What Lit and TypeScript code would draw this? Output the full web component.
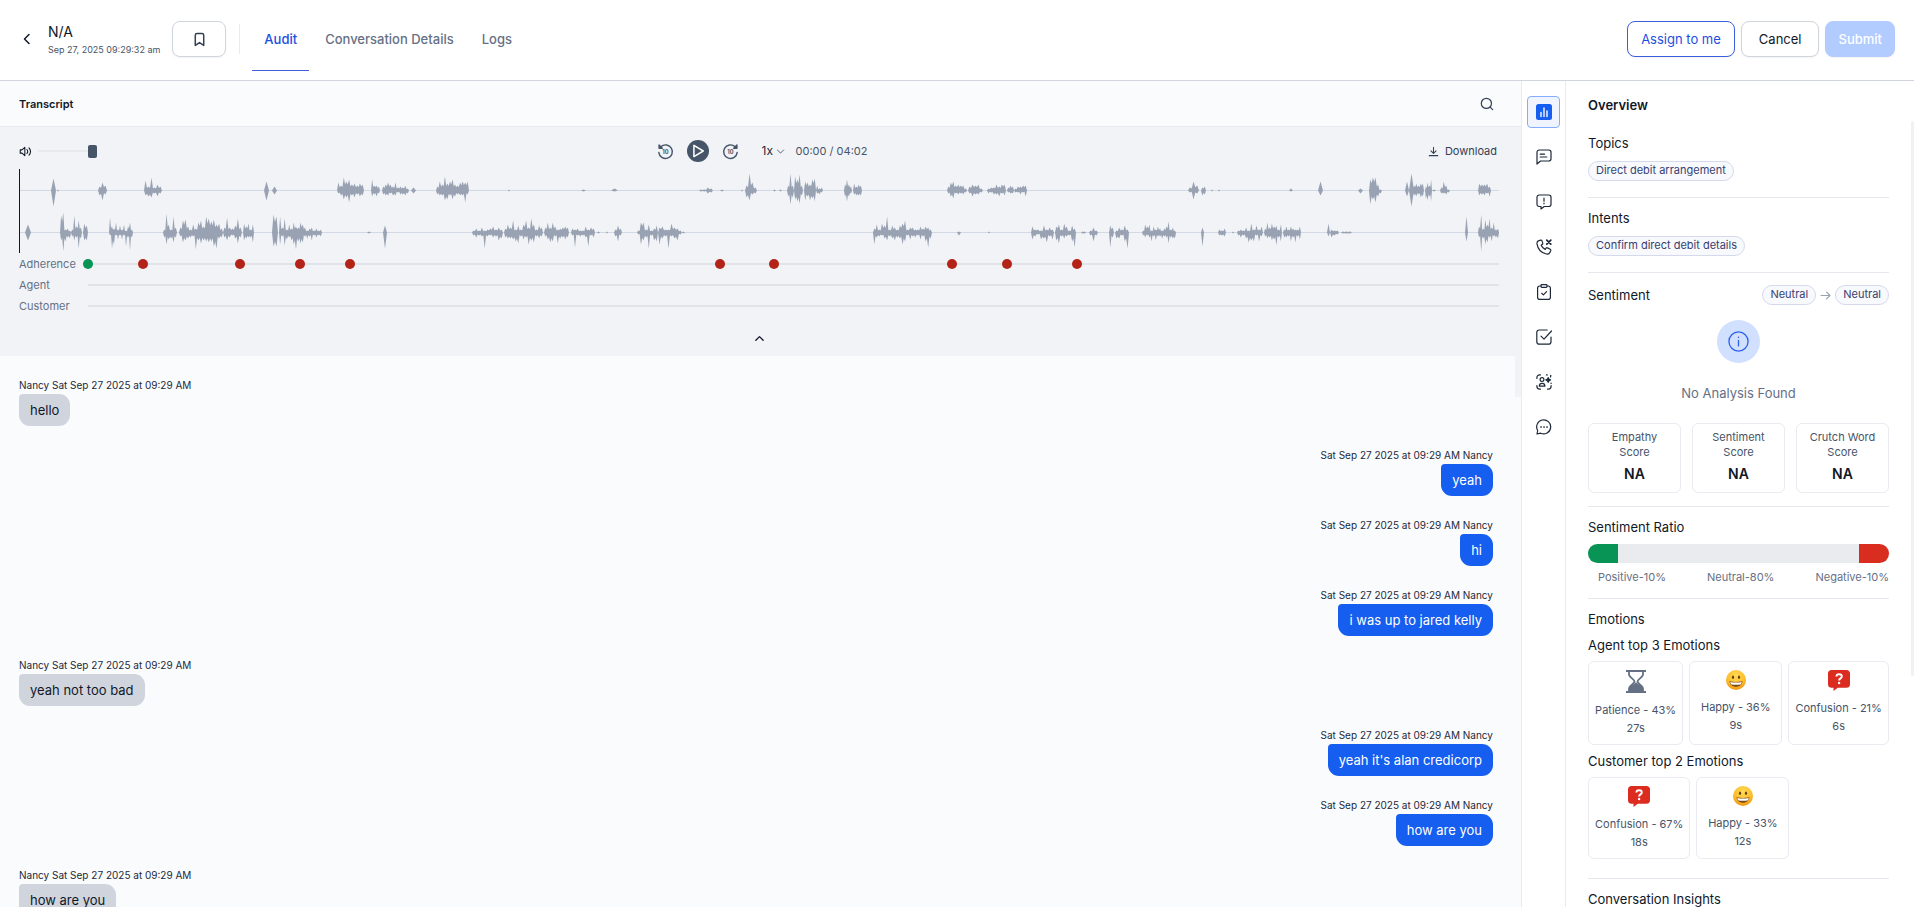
import { LitElement, html, css, svg } from "lit";
import { customElement, property, state } from "lit/decorators.js";
import { classMap } from "lit/directives/class-map.js";

/* A burst of speech: start, end, peaks above the axis, peaks below it. */
type Burst = [number, number, number[], number[]];

const AGENT_WAVE: Burst[] = [
  [51, 56, [12], [16]], [57, 59, [1], [1]], [98, 107, [4, 8, 5], [5, 10, 4]],
  [144, 162, [10, 4, 13, 3, 6, 4], [5, 6, 7, 3, 6, 3]],
  [264, 269, [9], [10]], [272, 277, [4], [4]],
  [337, 364, [8, 5, 13, 9, 11, 6, 7, 5, 7, 6], [3, 5, 9, 7, 12, 5, 7, 4, 6, 5]],
  [371, 380, [11, 5, 5, 4], [6, 4, 6, 3]],
  [382, 409, [4, 6, 8, 6, 4, 8, 3, 4, 3, 5, 2], [4, 5, 5, 3, 5, 5, 2, 4, 4, 5, 3]],
  [411, 416, [3], [3]],
  [436, 469, [4, 9, 6, 14, 7, 9, 11, 6, 5, 8, 9, 8, 9], [4, 5, 5, 10, 9, 5, 9, 6, 4, 5, 5, 12, 4]],
  [508, 510, [1], [1]], [581, 586, [1], [1]], [611, 618, [2], [1]],
  [699, 713, [1, 1, 3, 2], [1, 1, 3, 2]], [720, 724, [1], [1]], [741, 743, [1], [1]],
  [745, 757, [5, 17, 8, 3], [7, 10, 4, 3]], [773, 776, [1], [1]], [779, 782, [1], [1]],
  [787, 794, [5, 17, 5], [6, 14, 7]], [794, 803, [14, 11, 16, 5], [9, 11, 13, 5]],
  [804, 816, [9, 8, 6, 11, 12], [10, 6, 10, 8, 11]], [816, 823, [5, 2, 3], [3, 4, 2]],
  [844, 852, [6, 11, 6, 4], [6, 11, 6, 3]], [853, 862, [7, 4, 6, 5], [4, 5, 5, 5]],
  [947, 967, [4, 8, 9, 5, 6, 5, 5, 2], [3, 6, 8, 3, 4, 3, 4, 2]],
  [968, 983, [4, 6, 5, 6, 2], [3, 6, 4, 4, 2]],
  [987, 1006, [2, 3, 3, 6, 4, 6, 6], [3, 2, 4, 4, 6, 3, 5]],
  [1007, 1014, [3, 5, 4], [2, 3, 3]], [1014, 1027, [2, 4, 4, 5, 5], [2, 2, 4, 2, 6]],
  [1188, 1199, [3, 9, 5], [2, 9, 3]], [1201, 1206, [3, 4], [5, 4]],
  [1211, 1213, [1], [1]], [1218, 1220, [1], [1]], [1289, 1293, [2], [1]],
  [1318, 1323, [9], [5]], [1358, 1363, [2], [3]],
  [1369, 1382, [11, 13, 13, 6, 1], [14, 9, 12, 6, 3]],
  [1405, 1409, [9], [6]], [1409, 1414, [17], [16]],
  [1413, 1424, [5, 7, 5, 7, 7], [5, 6, 4, 7, 6]], [1425, 1432, [4, 8, 5, 11], [8, 10, 6, 11]],
  [1432, 1436, [1], [1]], [1440, 1450, [3, 9, 5, 1], [3, 3, 4, 2]],
  [1478, 1491, [7, 6, 6, 7, 4], [5, 4, 5, 3, 6]],
];

const CUSTOMER_WAVE: Burst[] = [
  [25, 31, [8], [8]], [60, 71, [17, 20, 3, 4, 2], [8, 19, 9, 5, 6]],
  [71, 82, [3, 17, 6, 12, 5], [4, 8, 5, 16, 6]], [83, 88, [9, 7], [8, 8]],
  [109, 133, [15, 6, 4, 10, 3, 7, 3, 8, 2, 6, 10, 3], [3, 16, 12, 3, 7, 3, 7, 3, 14, 5, 18, 5]],
  [163, 177, [3, 19, 8, 3, 16, 5], [5, 12, 7, 6, 10, 5]],
  [179, 223, [5, 12, 13, 6, 3, 8, 4, 10, 12, 6, 16, 14, 11, 13, 8, 9, 4], [4, 10, 8, 6, 5, 4, 17, 8, 11, 8, 9, 10, 9, 14, 16, 6, 5]],
  [223, 242, [5, 15, 5, 4, 7, 14, 5], [5, 8, 5, 3, 6, 11, 5]],
  [243, 254, [9, 6, 9, 3, 8], [8, 6, 5, 5, 10]], [272, 278, [18, 16], [14, 14]],
  [279, 322, [16, 5, 14, 3, 8, 4, 10, 6, 5, 10, 8, 5, 2, 4, 5, 2, 4, 2, 3], [12, 4, 13, 7, 5, 8, 12, 17, 9, 11, 10, 4, 6, 4, 8, 3, 5, 3, 4]],
  [367, 371, [1], [1]], [383, 387, [7], [16]],
  [472, 503, [2, 4, 2, 5, 2, 3, 4, 6, 3, 5, 3], [3, 5, 3, 4, 16, 4, 3, 5, 4, 8, 6]],
  [504, 543, [4, 8, 5, 12, 3, 7, 3, 8, 12, 5, 14, 8, 3, 7, 5], [5, 6, 6, 7, 9, 11, 4, 7, 5, 12, 8, 10, 4, 6, 4]],
  [544, 569, [5, 10, 5, 10, 6, 3, 4, 5, 6, 5], [4, 7, 10, 9, 4, 11, 6, 5, 7, 5]],
  [571, 595, [4, 3, 4, 2, 2, 6, 3, 5, 4], [3, 15, 3, 4, 3, 5, 14, 3, 5]],
  [597, 600, [1], [1]], [606, 608, [1], [1]], [614, 622, [3, 7, 4], [4, 9, 3]],
  [637, 658, [2, 10, 10, 3, 8, 2, 4, 7], [2, 12, 8, 5, 16, 3, 8, 9]],
  [658, 682, [5, 6, 3, 3, 9, 5, 4, 2], [12, 6, 4, 16, 4, 6, 8, 2]], [682, 685, [1], [1]],
  [873, 932, [4, 8, 3, 9, 7, 16, 3, 7, 5, 3, 7, 9, 12, 3, 5, 5, 3, 3, 6, 4, 6, 5, 3], [12, 5, 4, 3, 6, 8, 4, 6, 8, 5, 6, 12, 9, 3, 7, 4, 5, 3, 7, 4, 9, 15, 6]],
  [957, 961, [1], [3]], [988, 990, [1], [1]],
  [1031, 1054, [6, 3, 3, 2, 7, 3, 5, 3], [7, 4, 2, 7, 6, 10, 4, 7]],
  [1055, 1076, [6, 8, 3, 9, 6, 2, 7, 4], [8, 11, 4, 6, 4, 3, 9, 15]],
  [1081, 1086, [1, 1], [1, 1]], [1089, 1098, [2, 5, 2], [3, 9, 3]],
  [1109, 1114, [7, 5], [15, 5]], [1115, 1129, [2, 5, 3, 7, 3], [6, 6, 3, 9, 16]],
  [1142, 1176, [2, 8, 6, 8, 2, 6, 3, 6, 4, 2, 4, 6, 11, 3, 5, 2], [3, 5, 3, 5, 9, 4, 8, 4, 4, 6, 4, 5, 11, 5, 6, 6]],
  [1201, 1204, [5], [14]], [1218, 1226, [3, 2, 4], [3, 3, 4]], [1232, 1234, [1], [1]],
  [1237, 1263, [2, 3, 2, 5, 2, 9, 3, 7, 3, 6], [3, 5, 3, 6, 10, 8, 9, 3, 9, 4]],
  [1264, 1282, [4, 10, 5, 9, 6, 7, 3, 8], [4, 6, 5, 8, 7, 13, 5, 9]],
  [1283, 1301, [3, 6, 3, 6, 4, 3, 3, 6], [5, 5, 4, 9, 5, 10, 4, 7]],
  [1327, 1330, [9], [4]], [1330, 1339, [3, 2, 2], [5, 3, 2]], [1341, 1352, [1, 1, 1], [1, 1, 1]],
  [1465, 1468, [16], [9]],
  [1478, 1499, [6, 18, 4, 13, 8, 14, 5, 10, 3, 4], [5, 19, 6, 12, 10, 5, 9, 4, 5, 6]],
];

function wavePath(bursts: Burst[], axis: number): string {
  const edge = (start: number, end: number, peaks: number[], sign: number) => {
    const step = (end - start) / peaks.length;
    const pts: string[] = [];
    peaks.forEach((p, i) => {
      pts.push(`${(start + step * (i + 0.5)).toFixed(1)} ${axis + sign * p}`);
      if (i < peaks.length - 1) {
        const dip = Math.min(p, peaks[i + 1]) * 0.65;
        pts.push(`${(start + step * (i + 1)).toFixed(1)} ${(axis + sign * dip).toFixed(1)}`);
      }
    });
    return pts;
  };
  return bursts
    .map(([a, b, up, down]) =>
      `M${a} ${axis}L${[...edge(a, b, up, -1), `${b} ${axis}`, ...edge(a, b, down, 1).reverse()].join("L")}Z`)
    .join("");
}

const MARKERS = [
  { at: 0, ok: true }, { at: 3.9, ok: false }, { at: 10.8, ok: false }, { at: 15, ok: false },
  { at: 18.6, ok: false }, { at: 44.8, ok: false }, { at: 48.6, ok: false },
  { at: 61.2, ok: false }, { at: 65.1, ok: false }, { at: 70.1, ok: false },
];

const MESSAGES = [
  { mine: false, text: "hello" },
  { mine: true, text: "yeah" },
  { mine: true, text: "hi" },
  { mine: true, text: "i was up to jared kelly" },
  { mine: false, text: "yeah not too bad" },
  { mine: true, text: "yeah it's alan credicorp" },
  { mine: true, text: "how are you" },
  { mine: false, text: "how are you" },
];

const ICONS: Record<string, unknown> = {
  back: svg`<path d="M10 3.5 5.5 8l4.500 4.500"/>`,
  bookmark: svg`<path d="M3.500 3.500c0-1.100.7-1.800 1.800-1.800h5.400c1.100 0 1.800.7 1.800 1.800v10.800L8 11.300l-4.500 3z"/>`,
  search: svg`<circle cx="7.300" cy="7.300" r="5.800"/><path d="m11.600 11.600 2.900 2.900"/>`,
  volume: svg`<path d="M1.500 6v4h2.200l3.500 3.200V2.800L3.700 6z"/><path d="M9.800 5.500c1.100 1.500 1.100 3.500 0 5M12.300 3.500c2.200 2.600 2.200 6.400 0 9"/>`,
  up: svg`<path d="m3.500 10.200 4.500-4.500 4.500 4.500"/>`,
  down: svg`<path d="m2.500 5.300 5.500 5.500 5.500-5.500"/>`,
  download: svg`<path d="M8 2v8.500M4.300 7 8 10.700 11.700 7M1.800 14h12.400"/>`,
  arrow: svg`<path d="M1.500 8h13M9.500 3l5 5-5 5"/>`,
  overview: svg`<rect x="0" y="0" width="16" height="16" rx="2.500" fill="#155eef" stroke="none"/><path d="M5 8.500v4M8 4v8.500M11 7v5.500" stroke="#dfe8ff" stroke-width="1.600"/>`,
  comment: svg`<path d="M1 15V3.200C1 1.900 1.900 1 3.200 1h9.600C14.100 1 15 1.900 15 3.200v6.600c0 1.300-.9 2.200-2.200 2.200H4.500z"/><path d="M4.200 5.200h4.300M4.200 8h6.600"/>`,
  alert: svg`<path d="M5 15v-2.500H3.200C1.900 12.500 1 11.600 1 10.300V3.200C1 1.900 1.900 1 3.200 1h9.600C14.100 1 15 1.900 15 3.200v7.100c0 1.300-.9 2.200-2.200 2.200H8.200z"/><path d="M8 4v3.200M8 9.200v.6"/>`,
  phone: svg`<path d="M4.800 1.200 2.900 1.700C1.400 2.100.8 3.300 1 4.900c.8 5.300 4.300 9 9.400 10.100 1.700.4 3-.2 3.600-1.700l.7-1.600c.2-.6 0-1.100-.5-1.400l-2.700-1.400c-.5-.3-1.100-.1-1.400.3l-.9 1.200C7.100 9.300 5.900 8 5.200 6.300l1.200-1c.4-.4.5-.9.300-1.400L6 1.900c-.2-.5-.7-.8-1.200-.7z"/><path d="m10.800 1.200 4 4M14.800 1.200l-4 4" stroke-width="1.700"/>`,
  clipboard: svg`<path d="M5 2H3.800C2.500 2 1.600 2.900 1.600 4.200v9c0 1.300.9 2.200 2.200 2.200h8.400c1.300 0 2.200-.9 2.200-2.200v-9C14.400 2.900 13.500 2 12.200 2H11"/><rect x="5" y=".7" width="6" height="2.600" rx=".8"/><path d="m5.700 9.300 1.700 1.600 3.200-3.200"/>`,
  check: svg`<path d="M11.200 1H3.300C1.800 1 .8 2 .8 3.500v9.200c0 1.500 1 2.500 2.500 2.500h9.200c1.500 0 2.500-1 2.500-2.500V8"/><path d="m5 7.200 3 3 7.500-8.200"/>`,
  persona: svg`<path d="M.9 4.500V3.700C.9 2 2 .9 3.700.9h.8M.9 11.500v.8c0 1.700 1.100 2.800 2.800 2.800h.8M15.100 11.500v.8c0 1.700-1.100 2.800-2.800 2.800h-.8M10.500.9h.8M15.100 9v.4"/><circle cx="6" cy="5.600" r="1.900"/><path d="M3.300 12.200c0-1.800 1-2.800 2.800-2.800s2.800 1 2.800 2.800z"/><path d="M12.200 3.600c.3 1.500.8 2 2.400 2.300-1.600.3-2.100.8-2.400 2.400-.3-1.600-.8-2.100-2.400-2.400 1.600-.3 2.100-.8 2.400-2.300z" fill="currentColor"/><path d="M14.600 1.300v1.600"/>`,
  chat: svg`<path d="M1 15l.7-3.500A7 7 0 1 1 4.700 14.200z"/><path d="M5 8h.1M8 8h.1M11 8h.1" stroke-width="1.700"/>`,
  info: svg`<circle cx="8" cy="8" r="7.300"/><path d="M8 7.200v4.200M8 4.600v.3"/>`,
};

const icon = (name: string, size = 16, width = 1.2) => html`<svg
  width=${size} height=${size} viewBox="0 0 16 16" fill="none" stroke="currentColor"
  stroke-width=${width} stroke-linecap="round" stroke-linejoin="round"
  aria-hidden="true">${ICONS[name]}</svg>`;

const skip = (forward: boolean) => html`<svg width="17" height="17" viewBox="0 0 18 18" fill="none"
  stroke="currentColor" stroke-width="1.500" stroke-linecap="round" aria-hidden="true">
  <g transform=${forward ? "translate(18 0) scale(-1 1)" : ""}>
    <path d="M4.300 3.800A7.200 7.200 0 1 1 1.900 10"/>
    <path d="M2.200 2.200v3.400h3.400z" fill="currentColor" stroke-linejoin="round"/>
  </g>
  <text class="ten" x="9" y="12">10</text>
</svg>`;

const MOODS: Record<string, unknown> = {
  Patience: html`<svg width="20" height="23" viewBox="0 0 20 23" aria-hidden="true">
    <path d="M0 0h20v2H0zM0 21h20v2H0z" fill="#667085"/>
    <path d="M3 1v3.500c0 2.500 5.500 5 5.500 7S3 16 3 18.500V22h14v-3.500c0-2.500-5.500-5-5.500-7s5.500-4.500 5.500-7V1" fill="none" stroke="#667085" stroke-width="1.800"/>
    <path d="M10 11.500c0 2.500-6.500 3.500-7 7V22h14v-3.500c-.5-3.500-7-4.500-7-7z" fill="#667085"/>
  </svg>`,
  Happy: html`<svg width="20" height="20" viewBox="0 0 20 20" aria-hidden="true">
    <defs><radialGradient id="face" cx=".5" cy=".3" r=".75">
      <stop offset="0" stop-color="#ffdc55"/><stop offset=".6" stop-color="#fcbd2c"/><stop offset="1" stop-color="#ee8d0c"/>
    </radialGradient></defs>
    <circle cx="10" cy="10" r="10" fill="url(#face)"/>
    <ellipse cx="7" cy="7.200" rx="1.100" ry="1.800" fill="#6b3d10"/>
    <ellipse cx="13" cy="7.200" rx="1.100" ry="1.800" fill="#6b3d10"/>
    <path d="M3.500 11.200c4.300.9 8.700.9 13 0-.3 3.300-3 5.500-6.500 5.500s-6.200-2.200-6.500-5.500z" fill="#7a4a14"/>
    <path d="M4.200 11.900c3.900.7 7.700.7 11.600 0-.2 1.100-.6 1.900-1.200 2.500-3 .5-6.200.5-9.200 0-.6-.6-1-1.400-1.200-2.500z" fill="#fff"/>
  </svg>`,
  Confusion: html`<svg width="22" height="21" viewBox="0 0 22 21" aria-hidden="true">
    <path d="M3.500 0h15C20.500 0 22 1.300 22 3.200v11.300c0 2-1.500 3.300-3.500 3.300H9.800L5.500 21v-3.200h-2C1.500 17.800 0 16.500 0 14.500V3.200C0 1.300 1.500 0 3.500 0z" fill="#dc2b1f"/>
    <path d="M8.400 6.600c0-1.500 1.100-2.400 2.700-2.400s2.700.9 2.700 2.300c0 1.900-2.700 1.900-2.700 3.900" fill="none" stroke="#fff" stroke-width="1.900"/>
    <circle cx="11.100" cy="13" r="1.200" fill="#fff"/>
  </svg>`,
};

const base = css`
  * { box-sizing: border-box; }
  button, select, input { font: inherit; color: inherit; }
  svg { display: block; flex: none; }
  h2, h3, p, dl, dd, ul, ol { margin: 0; padding: 0; font: inherit; }
  ul, ol { list-style: none; }
  .plain { display: flex; align-items: center; padding: 0; border: 0; background: none; cursor: pointer; }
`;

@customElement("audit-header")
class AuditHeader extends LitElement {
  @state() private tab = "Audit";

  static styles = [base, css`
    :host { display: flex; align-items: center; height: 81px; padding: 0 19px 2px; border-bottom: 1px solid #d0d5e0; background: #fff; }
    .title { display: flex; flex-direction: column; gap: 2px; margin: 0 12px 0 13px; padding-top: 2px; }
    .name { font-size: 14px; line-height: 18px; }
    .date { font-size: 9px; line-height: 14px; color: #475467; }
    .btn { display: flex; align-items: center; justify-content: center; height: 36px; padding: 0 13px; border: 1px solid #d0d5dd; border-radius: 8px; background: #fff; font-size: 13px; cursor: pointer; box-shadow: 0 1px 2px rgba(16, 24, 40, 0.05); }
    .mark { width: 54px; color: #344054; }
    .rule { width: 1px; height: 30px; margin: 0 12px 0 13px; background: #e8eaf0; }
    .tabs { display: flex; gap: 4px; }
    .tab { height: 64px; padding: 0 12px; border: 0; border-top: 1px solid transparent; border-bottom: 1px solid transparent; background: none; font-size: 13px; font-weight: 500; color: #667085; cursor: pointer; }
    .tab.on { color: #1d4ee0; border-bottom-color: #4460dc; }
    .actions { display: flex; gap: 6px; margin-left: auto; }
    .assign { color: #1d4ee0; border-color: #3c5ddc; }
    .cancel { padding: 0 17px; }
    .submit { border-color: #b2ccff; background: #b2ccff; color: #fff; font-weight: 500; padding: 0 12px; }
  `];

  render() {
    return html`
      <button class="plain" aria-label="Back">${icon("back", 16, 1.5)}</button>
      <div class="title">
        <span class="name">N/A</span>
        <span class="date">Sep 27, 2025 09:29:32 am</span>
      </div>
      <button class="btn mark" aria-label="Bookmark">${icon("bookmark", 15, 1.6)}</button>
      <span class="rule"></span>
      <nav class="tabs">
        ${["Audit", "Conversation Details", "Logs"].map((t) => html`
          <button class=${classMap({ tab: true, on: t === this.tab })} @click=${() => (this.tab = t)}>${t}</button>`)}
      </nav>
      <div class="actions">
        <button class="btn assign">Assign to me</button>
        <button class="btn cancel">Cancel</button>
        <button class="btn submit" disabled>Submit</button>
      </div>`;
  }
}

@customElement("audio-player")
class AudioPlayer extends LitElement {
  static styles = [base, css`
    :host { display: block; flex: none; padding: 12px 22px 0 19px; border-top: 1px solid #e6e9ee; background: #f1f3f6; color: #344054; }
    .bar { display: grid; grid-template-columns: 1fr auto 1fr; align-items: center; height: 24px; font-size: 11px; line-height: 16px; }
    .volume { display: flex; align-items: center; gap: 6px; color: #101828; }
    .range { appearance: none; width: 59px; height: 14px; margin: 0; background: linear-gradient(#e7e9ed, #e7e9ed) center / 100% 2px no-repeat; }
    .range::-webkit-slider-thumb { appearance: none; width: 9px; height: 13px; border-radius: 2px; background: #475569; }
    .center { display: flex; align-items: center; margin-left: 6px; color: #475569; }
    .ten { font: 700 6px Inter, sans-serif; fill: currentColor; stroke: none; text-anchor: middle; }
    .play { justify-content: center; width: 22px; height: 22px; margin: 0 13px; border-radius: 50%; background: #475569; color: #fff; }
    .speed { display: flex; align-items: center; margin-left: 23px; }
    .select { appearance: none; padding: 0 12px 0 0; margin-right: -10px; border: 0; background: none; font-size: 12px; color: #1d2939; }
    .speed svg { pointer-events: none; }
    .time { margin-left: 11px; }
    .download { justify-self: end; gap: 6px; padding-right: 2px; }
    .wave { display: block; width: 100%; height: 84px; margin-top: 6px; }
    .axis { stroke: #d3d9e4; stroke-width: 1; }
    .shape { fill: #98a2b3; }
    .cursor { stroke: #101828; stroke-width: 1; }
    .lane { display: flex; align-items: center; height: 21px; font-size: 11px; color: #667085; }
    .label { width: 69px; flex: none; }
    .track { position: relative; flex: 1; height: 2px; background: #e0e3e8; }
    .dot { position: absolute; top: -4px; width: 10px; height: 10px; margin-left: -5px; border-radius: 50%; background: #b42318; }
    .dot.ok { background: #079455; }
    .toggle { width: 100%; height: 36px; margin-top: 4px; justify-content: center; color: #101828; }
  `];

  render() {
    return html`
      <div class="bar">
        <label class="volume" aria-label="Volume">${icon("volume", 13, 1.3)}
          <input class="range" type="range" min="0" max="100" .value=${"100"} /></label>
        <div class="center">
          <button class="plain" aria-label="Back 10 seconds">${skip(false)}</button>
          <button class="plain play" aria-label="Play">
            <svg width="14" height="14" viewBox="0 0 12 12" fill="none" stroke="currentColor" stroke-width="1.300" stroke-linejoin="round"><path d="M2.500 1.200v9.600L10.500 6z"/></svg>
          </button>
          <button class="plain" aria-label="Forward 10 seconds">${skip(true)}</button>
          <label class="speed"><select class="select" aria-label="Speed"><option>1x</option></select>${icon("down", 9, 1.6)}</label>
          <span class="time">00:00 / 04:02</span>
        </div>
        <button class="plain download">${icon("download", 11, 1.5)}Download</button>
      </div>
      <svg class="wave" viewBox="19 0 1480 84" preserveAspectRatio="none" role="img" aria-label="Waveform">
        <path class="axis" d="M19 21.500H1499M19 63.500H1499"/>
        <path class="shape" d=${wavePath(AGENT_WAVE, 21.5)}></path>
        <path class="shape" d=${wavePath(CUSTOMER_WAVE, 63.5)}></path>
        <path class="cursor" d="M19.500 0V84"/>
      </svg>
      <div class="lane"><span class="label">Adherence</span>
        <div class="track">${MARKERS.map((m) => html`<i class=${classMap({ dot: true, ok: m.ok })} style="left:${m.at}%"></i>`)}</div></div>
      <div class="lane"><span class="label">Agent</span><div class="track"></div></div>
      <div class="lane"><span class="label">Customer</span><div class="track"></div></div>
      <button class="plain toggle" aria-label="Collapse player">${icon("up", 13, 1.6)}</button>`;
  }
}

@customElement("chat-message")
class ChatMessage extends LitElement {
  @property({ type: Boolean, reflect: true }) mine = false;
  @property() text = "";

  static styles = [base, css`
    :host { display: flex; flex-direction: column; align-items: flex-start; gap: 2px; }
    :host([mine]) { align-items: flex-end; }
    .meta { font-size: 10px; line-height: 14px; color: #1d2939; }
    .bubble { padding: 6px 11px; border-radius: 4px 11px 11px 11px; background: #d0d5dd; font-size: 13px; line-height: 20px; }
    :host([mine]) .bubble { background: #155eef; color: #fff; }
  `];

  render() {
    const when = "Sat Sep 27 2025 at 09:29 AM";
    return html`
      <span class="meta">${this.mine ? `${when} Nancy` : `Nancy ${when}`}</span>
      <p class="bubble">${this.text}</p>`;
  }
}

@customElement("icon-rail")
class IconRail extends LitElement {
  static styles = [base, css`
    :host { display: flex; flex-direction: column; align-items: center; gap: 13px; width: 45px; flex: none; padding-top: 15px; border: solid #e9ebf2; border-width: 0 1px; background: #fff; color: #1d2939; }
    .item { justify-content: center; width: 33px; height: 32px; border: 1px solid transparent; border-radius: 4px; }
    .item.on { border-color: #84adff; background: #eff4ff; }
  `];

  render() {
    const items = ["overview", "comment", "alert", "phone", "clipboard", "check", "persona", "chat"];
    return html`${items.map((n, i) => html`
      <button class=${classMap({ plain: true, item: true, on: i === 0 })} aria-label=${n}>${icon(n, 16, 1.2)}</button>`)}`;
  }
}

@customElement("overview-panel")
class OverviewPanel extends LitElement {
  static styles = [base, css`
    :host { position: relative; display: block; width: 348px; flex: none; padding: 14px 25px 0 22px; overflow: hidden; background: #fff; font-size: 13px; line-height: 20px; }
    .title { font-weight: 600; margin-bottom: 8px; }
    .section { padding: 10px 0 16px; border-bottom: 1px solid #e6e8ee; }
    .tight { padding-bottom: 13px; }
    .loose { padding-bottom: 19px; }
    .chips { display: flex; margin-top: 8px; }
    .chip { height: 20px; padding: 0 7px; border: 1px solid #d5d9eb; border-radius: 10px; background: #f8f9fc; font-size: 11px; line-height: 16px; color: #363f72; }
    .row { display: flex; align-items: center; justify-content: space-between; height: 24px; }
    .shift { display: flex; align-items: center; gap: 4px; color: #98a2b3; }
    .empty { display: flex; flex-direction: column; align-items: center; gap: 20px; margin: 13px 0 20px; color: #667085; }
    .badge { display: flex; align-items: center; justify-content: center; width: 43px; height: 43px; border-radius: 50%; background: #d1e0ff; color: #2e62ec; }
    .scores { display: grid; grid-template-columns: repeat(3, 1fr); gap: 11px; }
    .card { border: 1px solid #e9ebf0; border-radius: 6px; text-align: center; font-size: 11px; color: #475467; }
    .score { display: flex; flex-direction: column; gap: 5px; padding: 6px 12px 9px; line-height: 15px; }
    .value { font-size: 14px; line-height: 18px; font-weight: 600; color: #101828; }
    .ratio { display: flex; height: 19px; margin: 7px 0 6px; border-radius: 10px; overflow: hidden; background: #eaebef; justify-content: space-between; }
    .good { background: #079455; }
    .bad { background: #d92d20; }
    .legend { display: flex; justify-content: space-between; padding-left: 10px; font-size: 11px; line-height: 16px; color: #667085; }
    .sub { margin-top: 6px; }
    .moods { display: flex; gap: 6px; margin-top: 6px; }
    .mood { display: flex; flex-direction: column; align-items: center; min-width: 93px; padding: 8px 6px 7px; line-height: 18px; white-space: nowrap; }
    .fill .mood { flex: 1 1 auto; }
    .mood svg { margin-bottom: 8px; }
    .thumb { position: absolute; top: 40px; right: 0; width: 3px; height: 555px; border-radius: 3px; background: #f0f1f5; }
  `];

  private mood(name: string, share: number, secs: number) {
    return html`<li class="card mood">${MOODS[name]}<span>${name} - ${share}%</span><span>${secs}s</span></li>`;
  }

  render() {
    return html`
      <h2 class="title">Overview</h2>
      <section class="section">
        <h3>Topics</h3>
        <div class="chips"><span class="chip">Direct debit arrangement</span></div>
      </section>
      <section class="section">
        <h3>Intents</h3>
        <div class="chips"><span class="chip">Confirm direct debit details</span></div>
      </section>
      <section class="section tight">
        <div class="row">
          <h3>Sentiment</h3>
          <div class="shift"><span class="chip">Neutral</span>${icon("arrow", 11, 1.6)}<span class="chip">Neutral</span></div>
        </div>
        <div class="empty"><span class="badge">${icon("info", 21, 1)}</span><span>No Analysis Found</span></div>
        <div class="scores">
          ${["Empathy", "Sentiment", "Crutch Word"].map((n) => html`
            <div class="card score"><span>${n}<br />Score</span><span class="value">NA</span></div>`)}
        </div>
      </section>
      <section class="section tight">
        <h3>Sentiment Ratio</h3>
        <div class="ratio"><i class="good" style="width:10%"></i><i class="bad" style="width:10%"></i></div>
        <div class="legend"><span>Positive-10%</span><span>Neutral-80%</span><span>Negative-10%</span></div>
      </section>
      <section class="section loose">
        <h3>Emotions</h3>
        <h3 class="sub">Agent top 3 Emotions</h3>
        <ul class="moods fill">${this.mood("Patience", 43, 27)}${this.mood("Happy", 36, 9)}${this.mood("Confusion", 21, 6)}</ul>
        <h3 class="sub">Customer top 2 Emotions</h3>
        <ul class="moods">${this.mood("Confusion", 67, 18)}${this.mood("Happy", 33, 12)}</ul>
      </section>
      <section class="section">
        <h3>Conversation Insights</h3>
      </section>
      <span class="thumb"></span>`;
  }
}

@customElement("app-root")
class AppRoot extends LitElement {
  static styles = [base, css`
    :host { display: flex; flex-direction: column; height: 100vh; overflow: hidden; font-family: Inter, "Open Sans", sans-serif; font-size: 13px; color: #101828; background: #fff; }
    .body { display: flex; flex: 1; min-height: 0; }
    .main { display: flex; flex-direction: column; flex: 1; min-width: 0; background: #fafbfd; }
    .top { display: flex; align-items: center; justify-content: space-between; height: 45px; flex: none; padding: 0 27px 0 19px; }
    .heading { font-size: 11px; font-weight: 600; line-height: 16px; }
    .find { color: #344054; }
    .log { position: relative; flex: 1; min-height: 0; overflow: hidden; }
    .list { display: flex; flex-direction: column; gap: 22px; padding: 22px 28px 22px 19px; }
    .thumb { position: absolute; top: 0; right: 0; width: 6px; height: 41px; background: #f1f3f6; }
  `];

  render() {
    return html`
      <audit-header></audit-header>
      <div class="body">
        <main class="main">
          <div class="top">
            <h2 class="heading">Transcript</h2>
            <button class="plain find" aria-label="Search">${icon("search", 14, 1.4)}</button>
          </div>
          <audio-player></audio-player>
          <div class="log">
            <div class="list">${MESSAGES.map((m) => html`<chat-message ?mine=${m.mine} .text=${m.text}></chat-message>`)}</div>
            <span class="thumb"></span>
          </div>
        </main>
        <icon-rail></icon-rail>
        <overview-panel></overview-panel>
      </div>`;
  }
}
